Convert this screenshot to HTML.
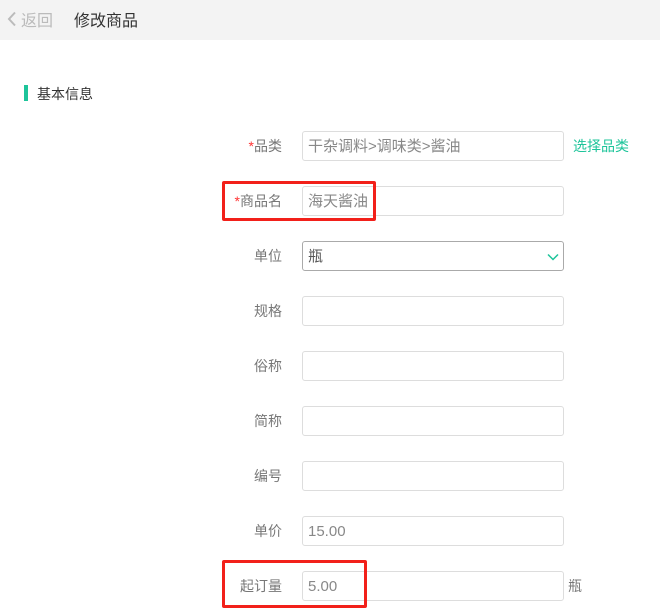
<!DOCTYPE html>
<html><head><meta charset="utf-8"><style>
*{margin:0;padding:0;box-sizing:border-box}
body{width:660px;height:616px;background:#fff;font-family:"Liberation Sans","Noto Sans CJK SC",sans-serif;font-size:14px;color:#333;position:relative;overflow:hidden}
.hd{position:absolute;left:0;top:0;width:660px;height:40px;background:#f3f3f3}
.back{position:absolute;left:21px;top:7px;font-size:16px;color:#bbb}
.title{position:absolute;left:74px;top:7px;font-size:16px;color:#333}
.bar{position:absolute;left:24px;top:85px;width:4px;height:16px;background:#1dc49a}
.sec{position:absolute;left:37px;top:84px;font-size:14px;color:#333}
.lb{position:absolute;right:378px;font-size:14px;color:#777;line-height:30px}
.lb i{color:#f33;font-style:normal}
.in{position:absolute;left:302px;width:262px;height:30px;border:1px solid #ddd;border-radius:3px;padding-left:5px;line-height:29px;color:#888;font-size:15px}
.red{position:absolute;border:3px solid #f2201a;border-radius:2px}
</style></head><body>
<div class="hd"><svg style="position:absolute;left:7px;top:11px" width="10" height="16" viewBox="0 0 10 16"><path d="M8 1.5L2 8L8 14.5" stroke="#bbb" stroke-width="2" fill="none"/></svg><span class="back">返回</span><span class="title">修改商品</span></div>
<div class="bar"></div><div class="sec">基本信息</div>

<div class="lb" style="top:131px"><i>*</i>品类</div>
<div class="in" style="top:131px">干杂调料&gt;调味类&gt;酱油</div>
<div style="position:absolute;left:573px;top:131px;line-height:30px;color:#1dc49a">选择品类</div>

<div class="lb" style="top:186px"><i>*</i>商品名</div>
<div class="in" style="top:186px">海天酱油</div>

<div class="lb" style="top:241px">单位</div>
<div class="in" style="top:241px;border-color:#aaa;color:#555">瓶
<svg style="position:absolute;right:4px;top:11px" width="12" height="8" viewBox="0 0 12 8"><path d="M1 1.5L6 6.5L11 1.5" stroke="#1dc49a" stroke-width="1.5" fill="none"/></svg></div>

<div class="lb" style="top:296px">规格</div><div class="in" style="top:296px"></div>
<div class="lb" style="top:351px">俗称</div><div class="in" style="top:351px"></div>
<div class="lb" style="top:406px">简称</div><div class="in" style="top:406px"></div>
<div class="lb" style="top:461px">编号</div><div class="in" style="top:461px"></div>
<div class="lb" style="top:516px">单价</div><div class="in" style="top:516px">15.00</div>
<div class="lb" style="top:571px">起订量</div><div class="in" style="top:571px">5.00</div>
<div style="position:absolute;left:568px;top:571px;line-height:30px;color:#777">瓶</div>

<div class="red" style="left:222px;top:181px;width:154px;height:40px"></div>
<div class="red" style="left:222px;top:560px;width:145px;height:48px"></div>
</body></html>
